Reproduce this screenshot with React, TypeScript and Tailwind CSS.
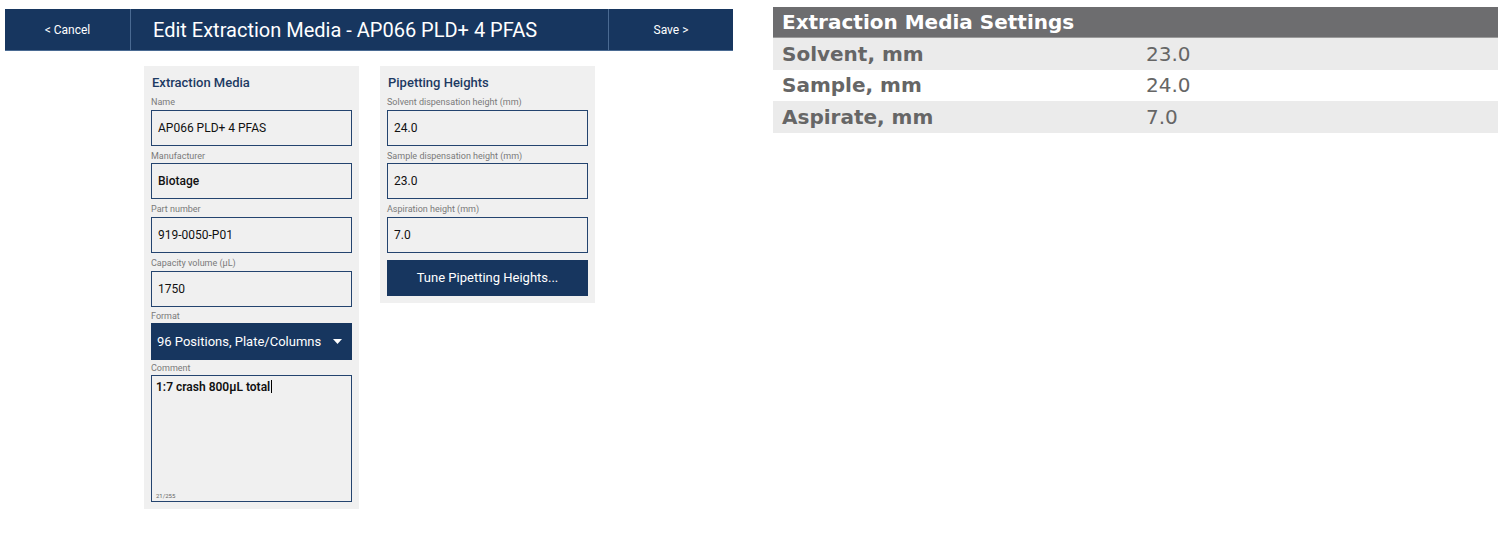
const font = "font-['Roboto','Noto_Sans',sans-serif]";

function Field({ label, value, bold }: { label: string; value: string; bold?: boolean }) {
  return (
    <div>
      <div className="h-[17.7px] pt-[4px] text-[9px] leading-[12px] text-[#7a7a7a]">{label}</div>
      <div className="flex h-[36px] items-center border border-[#24446f] px-[6px] text-[12px] text-[#111]">
        <span className={bold ? "font-medium" : "font-normal"}>{value}</span>
      </div>
    </div>
  );
}

function Panel({ title, children }: { title: string; children: React.ReactNode }) {
  return (
    <div className="w-[215px] bg-[#f0f0f0] px-[7px] pt-[7px] pb-[7px]">
      <div className="h-[19px] pl-[1px] text-[13px] font-medium leading-[19px] text-[#1d3a63]">{title}</div>
      {children}
    </div>
  );
}

const rows = [
  { label: "Solvent, mm", value: "23.0" },
  { label: "Sample, mm", value: "24.0" },
  { label: "Aspirate, mm", value: "7.0" },
];

export default function App() {
  return (
    <div className={`flex h-[543px] w-[1503px] items-start bg-white ${font}`}>
      {/* editor */}
      <div className="w-[733px] pl-[5px] pt-[9px]">
        <div className="flex h-[42px] border-b border-[#4a6a92] bg-[#17365f] text-white">
          <div className="flex w-[126px] items-center justify-center border-r border-[#4a6a92] text-[12px]">&lt; Cancel</div>
          <div className="flex flex-1 items-center pl-[22px] text-[20px] leading-none">Edit Extraction Media - AP066 PLD+ 4 PFAS</div>
          <div className="flex w-[125px] items-center justify-center border-l border-[#4a6a92] text-[12px]">Save &gt;</div>
        </div>

        <div className="mt-[15px] flex items-start gap-[21px] pl-[139px]">
          <Panel title="Extraction Media">
            <Field label="Name" value="AP066 PLD+ 4 PFAS" />
            <Field label="Manufacturer" value="Biotage" bold />
            <Field label="Part number" value="919-0050-P01" />
            <Field label="Capacity volume (µL)" value="1750" />
            <div>
              <div className="h-[16px] pt-[3px] text-[9px] leading-[12px] text-[#7a7a7a]">Format</div>
              <div className="flex h-[37px] items-center justify-between bg-[#17365f] pl-[6px] pr-[10px] text-[13px] text-white">
                <span>96 Positions, Plate/Columns</span>
                <svg width="9" height="5" viewBox="0 0 9 5"><path d="M0 0h9L4.5 5z" fill="white" /></svg>
              </div>
            </div>
            <div>
              <div className="h-[15px] pt-[2px] text-[9px] leading-[12px] text-[#7a7a7a]">Comment</div>
              <div className="flex h-[127px] flex-col justify-between border border-[#24446f] pl-[4px] pt-[2px] text-[#111]">
                <div className="text-[12px] font-semibold">
                  1:7 crash 800µL total<span className="ml-[1px] inline-block h-[13px] w-px translate-y-[2px] bg-black" />
                </div>
                <div className="pb-[1px] text-[6px] leading-[8px] text-[#666]">21/255</div>
              </div>
            </div>
          </Panel>

          <Panel title="Pipetting Heights">
            <Field label="Solvent dispensation height (mm)" value="24.0" />
            <Field label="Sample dispensation height (mm)" value="23.0" />
            <Field label="Aspiration height (mm)" value="7.0" />
            <button className="mt-[7px] flex h-[36px] w-full items-center justify-center bg-[#17365f] text-[13px] text-white">
              Tune Pipetting Heights...
            </button>
          </Panel>
        </div>
      </div>

      {/* settings table */}
      <div className="ml-[40px] mt-[7px] w-[725px] font-['DejaVu_Sans',sans-serif]">
        <div className="flex h-[31px] items-center border-b border-[#9a9a9a] bg-[#6d6d6f] pl-[9px] text-[20px] font-bold text-white">
          Extraction Media Settings
        </div>
        {rows.map((r, i) => (
          <div
            key={r.label}
            className={`grid h-[31.5px] grid-cols-[373px_1fr] items-center pl-[9px] text-[20px] text-[#666] ${i % 2 === 0 ? "bg-[#ebebeb]" : "bg-white"}`}
          >
            <span className="font-bold">{r.label}</span>
            <span className="-ml-[9px]">{r.value}</span>
          </div>
        ))}
      </div>
    </div>
  );
}
